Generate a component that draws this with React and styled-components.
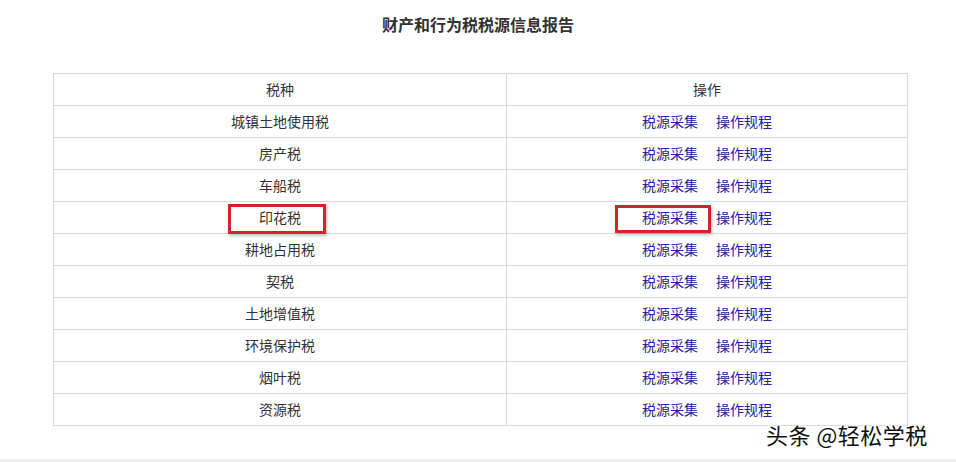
import styled, { createGlobalStyle } from "styled-components"

const taxes = [
  "城镇土地使用税",
  "房产税",
  "车船税",
  "印花税",
  "耕地占用税",
  "契税",
  "土地增值税",
  "环境保护税",
  "烟叶税",
  "资源税",
]

const GlobalStyle = createGlobalStyle`
  html, body {
    margin: 0;
    padding: 0;
    background: #fff;
    font-family: "Microsoft YaHei", "Noto Sans CJK SC", sans-serif;
  }
`

function App() {
  return (
    <Page>
      <GlobalStyle />
      <Title>财产和行为税税源信息报告</Title>
      <Table>
        <colgroup>
          <col style={{ width: 453 }} />
          <col style={{ width: 401 }} />
        </colgroup>
        <thead>
          <tr>
            <Th>税种</Th>
            <Th>操作</Th>
          </tr>
        </thead>
        <tbody>
          {taxes.map((name) => (
            <tr key={name}>
              <Td>
                <Marked $on={name === "印花税"} $w={98} $h={30} $shift={-3} $top={-3}>{name}</Marked>
              </Td>
              <Td>
                <Actions>
                  <Marked $on={name === "印花税"} $w={96} $h={28} $shift={-7} $top={-2}>
                    <LinkText>税源采集</LinkText>
                  </Marked>
                  <LinkText>操作规程</LinkText>
                </Actions>
              </Td>
            </tr>
          ))}
        </tbody>
      </Table>
      <Footer />
      <Watermark>头条 @轻松学税</Watermark>
    </Page>
  )
}

const Page = styled.div`
  position: relative;
  width: 956px;
  height: 462px;
  overflow: hidden;
  padding-top: 13px;
  box-sizing: border-box;
`

const Title = styled.h1`
  margin: 0 0 38px;
  text-align: center;
  font-size: 16px;
  line-height: 22px;
  font-weight: bold;
  color: #333;
`

const Table = styled.table`
  margin-left: 53px;
  width: 854px;
  border-collapse: collapse;
  table-layout: fixed;
  color: #333;
  font-size: 14px;
`

const Th = styled.th`
  height: 29px;
  padding: 0 0 2px;
  font-weight: normal;
  border: 1px solid #d9d9d9;
  text-align: center;
`

const Td = styled.td`
  height: 29px;
  padding: 0 0 2px;
  border: 1px solid #d9d9d9;
  text-align: center;
`

const Actions = styled.div`
  display: flex;
  justify-content: center;
  gap: 18px;
`

const LinkText = styled.span`
  color: #23239a;
  cursor: pointer;
`

const Marked = styled.span`
  position: relative;
  display: inline-block;
  &::after {
    content: "";
    display: ${(p) => (p.$on ? "block" : "none")};
    position: absolute;
    top: ${(p) => p.$top ?? -4}px;
    left: 50%;
    width: ${(p) => p.$w}px;
    height: ${(p) => p.$h}px;
    margin-left: ${(p) => -p.$w / 2 + (p.$shift || 0)}px;
    box-sizing: border-box;
    border: 3px solid #d3242b;
    box-shadow: 1px 2px 3px rgba(0, 0, 0, 0.25);
  }
`

const Footer = styled.div`
  position: absolute;
  left: 0;
  right: 0;
  bottom: 0;
  height: 3px;
  background: #eceef3;
`

const Watermark = styled.div`
  position: absolute;
  left: 766px;
  top: 418px;
  font-size: 22px;
  letter-spacing: 0.5px;
  color: #111;
  text-shadow: -1px -1px 0 #fff, 1px -1px 0 #fff, -1px 1px 0 #fff, 1px 1px 0 #fff,
    0 0 3px rgba(255, 255, 255, 0.9);
`

export default App
